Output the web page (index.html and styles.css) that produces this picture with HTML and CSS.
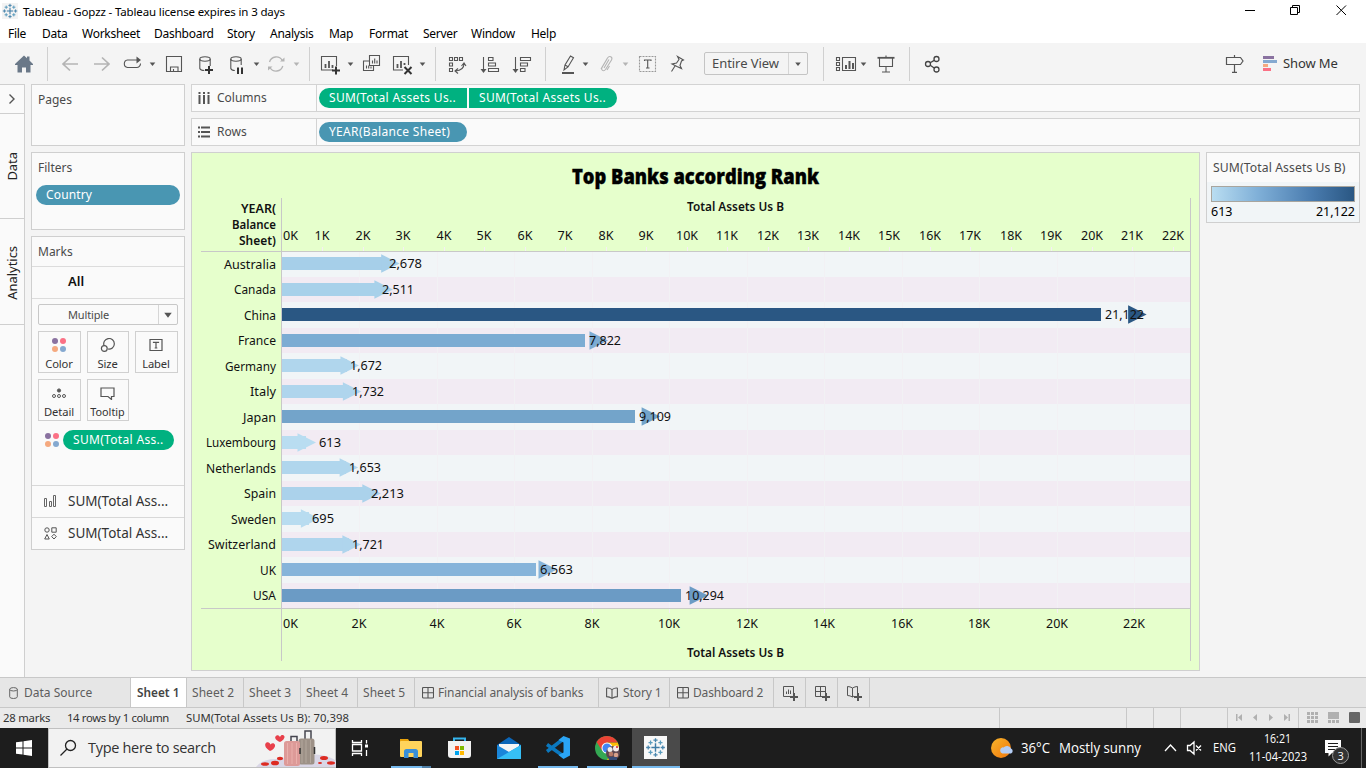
FILE: index.html
```html
<!DOCTYPE html>
<html lang="en">
<head>
<meta charset="utf-8">
<title>Tableau - Gopzz</title>
<link rel="stylesheet" href="styles.css">
</head>
<body>
<svg class="defs" width="0" height="0" aria-hidden="true">
  <defs>
    <g id="dots"><circle cx="3" cy="3" r="3" fill="#8a72a0"/><circle cx="11" cy="3" r="3" fill="#fb7185"/><circle cx="3" cy="11" r="3" fill="#f5a97f"/><circle cx="11" cy="11" r="3" fill="#85a9d0"/></g>
    <path id="caret" d="M-2.8-1.6H2.8L0 2z"/>
    <g id="dash" fill="none" stroke="#555" stroke-width="1.1"><rect x=".5" y=".5" width="11" height="10.5" rx="1"/><path d="M6 .5V11M.5 5.8H11.5"/></g>
    <path id="book" d="M.6 1.2Q3 .6 6 2.6Q9 .6 11.4 1.2V9.6Q8.5 9.6 6 11.4Q3.5 9.6.6 9.6ZM6 2.6V11" fill="none" stroke="#555" stroke-width="1.1"/>
    <g id="spark" stroke-width="1.1" fill="none">
      <path d="M8 4.8V11.2M4.8 8H11.2" stroke="#3f7ca6"/>
      <path d="M8 .8V4M6.4 2.4H9.6M8 12V15.2M6.4 13.6H9.6M.8 8H4M2.4 6.4V9.6M12 8H15.2M13.6 6.4V9.6" stroke="#4a86ad" stroke-width="1"/>
      <path d="M4.2 2.6V5.8M2.6 4.2H5.8M11.8 2.6V5.8M10.2 4.2H13.4M4.2 10.2V13.4M2.6 11.8H5.8M11.8 10.2V13.4M10.2 11.8H13.4" stroke="#5b9cbd" stroke-width="1"/>
    </g>
  </defs>
</svg>

<header class="titlebar">
  <svg width="16" height="16" viewBox="0 0 16 16"><rect width="16" height="16" fill="#f3f3f3"/><use href="#spark"/></svg>
  <span class="title">Tableau - Gopzz - Tableau license expires in 3 days</span>
  <svg class="winctl" width="136" height="24" viewBox="1230 0 136 24" fill="none" stroke="#000"><path d="M1245 10.5H1255M1290.5 7.5h7v7h-7zM1292.500 7.500v-2h7v7h-2M1336.500 5.500l9.500 9.500M1346 5.500l-9.500 9.500"/></svg>
</header>
<nav class="menubar"><span>File</span><span>Data</span><span>Worksheet</span><span>Dashboard</span><span>Story</span><span>Analysis</span><span>Map</span><span>Format</span><span>Server</span><span>Window</span><span>Help</span></nav>

<div class="toolbar">
  <svg width="48" height="41" viewBox="0 43 48 41"><path fill="#6a7888" d="M24 55.500l3 2.700v-1.700h2.500v4l3.500 3.500v1h-2.500v7.500h-4.500v-5h-4v5h-4.500v-7.500H15v-1z"/><path class="sep" d="M47.500 47v34"/></svg>
  <svg width="68" height="41" viewBox="48 43 68 41" class="line dim"><path stroke-width="1.7" d="M78 64H63M70 57.500L63 64l7 6.500M94 64h15M102 57.500l7 6.500-7 6.500"/></svg>
  <svg width="44" height="41" viewBox="116 43 44 41" class="line"><path d="M137 60h-9.500a3.800 3.800 0 0 0 0 7.500h9a3.800 3.800 0 0 0 4-4"/><path class="fill" d="M136.500 56.500l4.500 3.500-4.500 3.500z"/><use href="#caret" x="152.500" y="64" class="fill"/></svg>
  <svg width="28" height="41" viewBox="160 43 28 41" class="line"><path d="M166.500 56.500h15v15h-15zM170.500 71.500v-4.500h7.500v4.500M173.500 69v2"/></svg>
  <svg width="74" height="41" viewBox="188 43 74 41" class="line"><ellipse cx="205" cy="59" rx="5.200" ry="2.200"/><path d="M199.800 59v9.500q.8 2 4.500 2M210.200 59v7"/><path class="strong" d="M205 70h8M209 66v8"/><ellipse cx="236" cy="59" rx="5.200" ry="2.200"/><path d="M230.800 59v9.500q.8 2 4 2M241.200 59v6"/><path class="strong" d="M238 67.500v6.500M242 67.500v6.500"/><use href="#caret" x="256.500" y="64" class="fill"/></svg>
  <svg width="50" height="41" viewBox="262 43 50 41" class="line dim"><path stroke-width="1.300" d="M269.500 62a7 7 0 0 1 12.800-1.500M282.800 66a7 7 0 0 1-12.800 1.500"/><path class="fill" d="M280 61.500h4.500v-4zM272.500 66.500H268v4z"/><use href="#caret" x="296.500" y="64" class="fill"/><path class="sep" d="M309.500 47v34"/></svg>
  <svg width="124" height="41" viewBox="312 43 124 41" class="line"><path d="M333 70h-11.500v-13.500h15V66"/><path stroke-width="1.800" d="M325.500 68v-4M329 68v-7M332.500 68v-3"/><path class="strong" d="M332 70.500h8M336 66.500v8"/><use href="#caret" x="350.500" y="64" class="fill"/>
    <path d="M369.500 55.500h10v10h-10zM369 61h-5.500v9.500h10v-4.500M372.500 63.500v-3M374.700 63.500v-5M377 63.500v-3M366.500 68.500v-3M368.700 68.500v-3M371 68.500v-2"/>
    <path d="M403 70h-9.500v-13.500h15V65"/><path stroke-width="1.800" d="M397.500 68v-4M401 68v-7M404.500 65v-2"/><path class="strong" d="M404.500 67l7 7M411.500 67l-7 7"/><use href="#caret" x="422.500" y="64" class="fill"/><path class="sep" d="M435.500 47v34"/></svg>
  <svg width="110" height="41" viewBox="436 43 110 41" class="line"><path d="M449.500 57.500h3v3h-3zM454.500 57.500h3v3h-3zM459.500 57.500h3v3h-3zM449.500 63h3v3h-3zM449.500 68.500h3v3h-3zM464 63.500q0 7-8.500 7.500M461.500 66l2.500-3 2 3M458 68.500l-3 2.500 3 2.500"/>
    <path d="M483.500 57v14M488.500 57.500h4.500v3h-4.500zM488.500 63h7v3h-7zM488.500 68.500h10v3h-10z"/><path class="fill" d="M480.500 69h6l-3 4z"/>
    <path d="M515.500 57v14M520.500 57.500h10v3h-10zM520.500 63h7v3h-7zM520.500 68.500h4.500v3h-4.500z"/><path class="fill" d="M512.500 69h6l-3 4z"/><path class="sep" d="M545.500 47v34"/></svg>
  <svg width="158" height="41" viewBox="546 43 158 41" class="line"><path d="M564 70l1-5 5.500-9 3 1.700-5.500 9.300zM565 65l3.500 2"/><path stroke-width="2" d="M562 73h12"/><use href="#caret" x="585.500" y="64" class="fill"/>
    <g class="dim"><path d="M601 69l6.500-11c2-3 5.500-1 4 2l-6 9.500c-1.800 2.500-5 .5-3.500-2l5-8.500M604 68l5-8.500M609.500 66l-2.500 4"/><use href="#caret" x="625.500" y="64" class="fill"/></g>
    <rect x="639.500" y="56.500" width="16" height="15" stroke-dasharray="2 1" stroke="#999"/><path d="M644.500 61v-1h6.500v1M647.700 60v8M646 68h3.500"/>
    <path d="M677.500 56.500l6 3.500-2 1-1.500 4.500 1.500 3-4.500-2-5-2.500 4.500-1 2.500-3.500zM675 66l-3.500 5.500"/></svg>
  <div class="combo"><span>Entire View</span><i><svg width="8" height="6" viewBox="-4 -3 8 6"><use href="#caret" fill="#555"/></svg></i></div>
  <svg width="140" height="41" viewBox="808 43 140 41" class="line"><path class="sep" d="M823.500 47v34M909.500 47v34"/><path d="M836.500 57.500h3v3h-3zM836.500 62.500h3v3h-3zM836.500 67.500h3v3h-3zM842.500 57.500h13v13h-13z"/><path stroke-width="2" d="M846 69v-4M849.500 69v-8M853 69v-6"/><use href="#caret" x="863.500" y="64" class="fill"/>
    <path d="M879.500 58v8.500h13V58M886 55.500v2M886 67v5M882 72h8"/><path stroke-width="1.800" d="M877.500 57.800h17"/>
    <g stroke="#444" stroke-width="1.300"><circle cx="928" cy="64" r="2.500"/><circle cx="936.500" cy="59" r="2.500"/><circle cx="936.500" cy="69.500" r="2.500"/><path d="M930.200 62.800l4-2.400M930.200 65.300l4 2.700"/></g></svg>
  <svg class="guide" width="62" height="41" viewBox="1218 43 62 41"><path fill="none" stroke="#555" stroke-width="1.200" d="M1226.500 57.500h14l2.500 3.500-2.500 3.500h-14zM1234.500 55v2.500M1234.500 64.500v7.500M1232 72.400h5"/><path fill="#8a72a0" d="M1263 56h11v3h-11z"/><path fill="#85a9d0" d="M1263 60h14v3h-14z"/><path fill="#f5a97f" d="M1263 64h5v3h-5z"/><path fill="#fb7185" d="M1263 68h8v3h-8z"/></svg>
  <span class="showme">Show Me</span>
</div>

<main class="workspace">
  <aside class="rail">
    <div class="expand"><svg width="8" height="12" viewBox="0 0 8 12"><path d="M1.500 1.500L6 6l-4.500 4.500" fill="none" stroke="#555" stroke-width="1.400"/></svg></div>
    <div class="vtab"><span>Data</span></div>
    <div class="vtab"><span>Analytics</span></div>
  </aside>

  <section class="cards">
    <div class="card pages"><h2>Pages</h2></div>
    <div class="card filters"><h2>Filters</h2><div class="pill blue">Country</div></div>
    <div class="card marks">
      <h2>Marks</h2>
      <div class="all">All</div>
      <div class="body">
        <div class="select"><span>Multiple</span><i><svg width="10" height="8" viewBox="-3.600 -3 7.200 6"><use href="#caret" fill="#555"/></svg></i></div>
        <div class="buttons">
          <div class="btn"><svg width="14" height="14" viewBox="0 0 14 14"><use href="#dots"/></svg><span>Color</span></div>
          <div class="btn"><svg width="16" height="14" viewBox="0 0 16 14" fill="none" stroke="#555" stroke-width="1.200"><path d="M4 7.500a5.300 5.300 0 1 1 4 3.500"/><circle cx="4.300" cy="10.500" r="2.900"/></svg><span>Size</span></div>
          <div class="btn"><svg width="14" height="14" viewBox="0 0 14 14" fill="none" stroke="#555" stroke-width="1.200"><path d="M1 1.500h12v11H1zM4.500 5V4.400h5V5M7 4.400V10M5.700 10h2.600"/></svg><span>Label</span></div>
          <div class="btn"><svg width="14" height="14" viewBox="0 0 14 14" fill="none" stroke="#555"><circle cx="7" cy="4.500" r="1.600" fill="#555"/><circle cx="2" cy="10" r="1.500"/><circle cx="7" cy="10" r="1.500"/><circle cx="12" cy="10" r="1.500"/></svg><span>Detail</span></div>
          <div class="btn tip"><svg width="15" height="14" viewBox="0 0 15 14" fill="none" stroke="#555" stroke-width="1.200"><path d="M1 2h13v8.500h-2.500v3l-3.500-3H1z"/></svg><span>Tooltip</span></div>
        </div>
        <div class="encoding"><svg width="14" height="14" viewBox="0 0 14 14"><use href="#dots"/></svg><div class="pill green">SUM(Total Ass..</div></div>
      </div>
      <div class="layer"><svg width="13" height="13" viewBox="0 0 13 13" fill="none" stroke="#666"><path d="M.5 3.500h2v8h-2zM5.500 6.500h2v5h-2zM9.500 .500h2v11h-2z"/></svg>SUM(Total Ass...</div>
      <div class="layer"><svg width="13" height="13" viewBox="0 0 13 13" fill="none" stroke="#555"><circle cx="3" cy="3" r="2.200"/><path d="M7.800 .800h4.400v4.400H7.800zM.700 12l2.300-4.500L5.300 12zM10 7.200l2.300 2.400L10 12 7.700 9.600z"/></svg>SUM(Total Ass...</div>
    </div>
  </section>

  <section class="center">
    <div class="shelf"><div class="name"><svg width="12" height="12" viewBox="0 0 12 12" fill="#555"><path d="M.500 0h2v2h-2zM5 0h2v2H5zM9.500 0h2v2h-2zM.500 3h2v9h-2zM5 3h2v9H5zM9.500 3h2v9h-2z"/></svg>Columns</div><div class="pill green first">SUM(Total Assets Us..</div><div class="pill green last">SUM(Total Assets Us..</div></div>
    <div class="shelf"><div class="name"><svg width="12" height="12" viewBox="0 0 12 12" fill="#555"><path d="M0 .500h2v2H0zM0 5h2v2H0zM0 9.500h2v2H0zM3 .500h9v2H3zM3 5h9v2H3zM3 9.500h9v2H3z"/></svg>Rows</div><div class="pill blue">YEAR(Balance Sheet)</div></div>
    <div class="lower">
      <svg id="chart" class="chart" width="1007" height="517" viewBox="192 153 1007 517"></svg>
      <div class="legend"><h3>SUM(Total Assets Us B)</h3><div class="scale"><div class="ramp"></div><p><span>613</span><span>21,122</span></p></div></div>
    </div>
  </section>
</main>

<nav class="tabs">
  <div class="tab source"><svg width="9" height="12" viewBox="0 0 9 12" fill="none" stroke="#666"><ellipse cx="4.500" cy="2.300" rx="3.800" ry="1.700"/><path d="M.700 2.300v7.500q0 1.700 3.800 1.700t3.800-1.700V2.300"/></svg>Data Source</div>
  <div class="tab active">Sheet 1</div>
  <div class="tab sheet">Sheet 2</div><div class="tab sheet">Sheet 3</div><div class="tab sheet">Sheet 4</div><div class="tab sheet">Sheet 5</div>
  <div class="tab fin"><svg width="12" height="12"><use href="#dash"/></svg>Financial analysis of banks</div>
  <div class="tab story"><svg width="12" height="12"><use href="#book"/></svg>Story 1</div>
  <div class="tab dash2"><svg width="12" height="12"><use href="#dash"/></svg>Dashboard 2</div>
  <div class="tab new"><svg width="16" height="16" fill="none" stroke="#555"><path d="M9 11.500H1.500V1.500h10V8M4.500 9V6.500M6.500 9V4.500M8.500 9V5.500"/><path stroke-width="2" d="M8 12h8M12 8v8"/></svg></div>
  <div class="tab new"><svg width="16" height="16" fill="none" stroke="#555"><path d="M9 11.500H1.500V1.500h10V8M6.500 1.500v10M1.500 6.500h10"/><path stroke-width="2" d="M8 12h8M12 8v8"/></svg></div>
  <div class="tab new"><svg width="16" height="16" fill="none" stroke="#555"><path d="M8 11L6.500 12Q4 10.500 1.500 10.500V1.500Q4 1.500 6.500 3 9 1.500 11.500 1.500V8M6.500 3v9"/><path stroke-width="2" d="M8 12h8M12 8v8"/></svg></div>
</nav>

<footer class="status">
  <span class="s1">28 marks</span><span class="s2">14 rows by 1 column</span><span class="s3">SUM(Total Assets Us B): 70,398</span>
  <svg width="367" height="20" viewBox="999 708 367 20"><path d="M999.500 708v20M1126.500 708v20M1153.500 708v20M1180.500 708v20M1227.500 708v20M1298.500 708v20" stroke="#c8c8c8"/><path fill="#b0b0b0" d="M1236 714h1.500v7h-1.500zM1242 714v7l-4-3.500zM1257 714v7l-4-3.500zM1269 714v7l4-3.500zM1284 714v7l4-3.500zM1288.500 714h1.500v7h-1.500zM1307 712h3v3h-3zM1311 712h3v3h-3zM1315 712h3v3h-3zM1307 716h3v3h-3zM1311 716h3v3h-3zM1315 716h3v3h-3zM1307 720h3v3h-3zM1311 720h3v3h-3zM1315 720h3v3h-3zM1328 712h11v7h-11zM1328 720h3v3h-3zM1332 720h3v3h-3zM1336 720h3v3h-3z"/><rect x="1349" y="712" width="11" height="11" rx="1" fill="#666"/></svg>
</footer>

<footer class="taskbar">
  <svg width="48" height="40" viewBox="0 728 48 40" fill="#fff"><path d="M16 742.300l6.500-.900v6.100H16zM23.500 741.200l8.500-1.200v7.500h-8.500zM16 748.500h6.500v6.100l-6.500-.900zM23.500 748.500H32v7.500l-8.500-1.200z"/></svg>
  <div class="search">
    <svg width="38" height="38" viewBox="49 729 38 38" fill="none" stroke="#222" stroke-width="1.300"><circle cx="70.500" cy="745.500" r="5"/><path d="M67 749l-6.500 6.500"/></svg>
    <span>Type here to search</span>
    <svg class="trip" width="82" height="38" viewBox="254 729 82 38"><path d="M256 767q6-8 20-8l30-5q22 0 30 7v6z" fill="#d9d6e6"/><g fill="none" stroke="#45454f" stroke-width="1.500"><path d="M291 742v-5.500h6V742M305 739v-8h6v8"/></g><rect x="298.500" y="738.500" width="16" height="26" rx="2.500" fill="#9d9187"/><path d="M302 740v23M306 740v23M310.500 740v23" stroke="#b3a89d"/><rect x="284" y="741" width="16" height="25" rx="2.500" fill="#dd9a98"/><path d="M287.500 743v21M292 743v21M296.500 743v21" stroke="#eab0ac"/><path d="M300 748v6M314.500 747v7" stroke="#333" stroke-width="1.500"/><path fill="#e8404b" d="M270 751c-5-3-6-7-3.500-8.500 2-1 3.500.500 4 2 1.500-2 4-1.500 4.500.500.500 2-2 5-5 6zM280 742c-5-2-6-5-3.500-6.500 2-1 3 .500 3.500 1.500 1-3 4-2.500 4.500-.500.300 2-2 4.500-4.500 5.500z"/><g fill="#dd2b22"><ellipse cx="265" cy="764" rx="4" ry="1.800"/><ellipse cx="275" cy="763" rx="4" ry="2.300"/><ellipse cx="280" cy="758.500" rx="3" ry="1.700"/><ellipse cx="324" cy="758" rx="4" ry="2"/><ellipse cx="331" cy="763" rx="4" ry="1.700"/><ellipse cx="320" cy="763" rx="2" ry="1"/></g></svg>
  </div>
  <svg width="48" height="40" viewBox="336 728 48 40" fill="none" stroke="#fff" stroke-width="1.300"><path d="M352.500 740v2.500h9V740M352.500 756v-2.500h9v2.500M352.500 744.500h9v6.500h-9zM366.500 740v3.500M366.500 750v6"/><path fill="#fff" stroke="none" d="M365 744.500h3v3h-3z"/></svg>
  <svg width="51" height="40" viewBox="384 728 51 40"><path fill="#e9a30c" d="M400 739h8l2 3h-10z"/><rect x="400" y="741" width="22" height="16" rx="1" fill="#ffd45c"/><path fill="#3a8fd8" d="M404 758v-6.500q0-2.500 2.500-2.500h9q2.500 0 2.500 2.500v6.500h-4.500v-5h-5v5z"/><path fill="#76b9ed" d="M391 766h31v2h-31z"/><path fill="#4f7fa6" d="M422 766h9v2h-9z"/></svg>
  <svg width="49" height="40" viewBox="435 728 49 40"><path d="M454 742v-3.500h11v3.500" fill="none" stroke="#35b5ee" stroke-width="2"/><path d="M448 741h23v14q0 3-3 3h-17q-3 0-3-3z" fill="#f2f2f2"/><path fill="#f25022" d="M455 746h4v4h-4z"/><path fill="#7fba00" d="M460 746h4v4h-4z"/><path fill="#00a4ef" d="M455 751h4v4h-4z"/><path fill="#ffb900" d="M460 751h4v4h-4z"/></svg>
  <svg width="49" height="40" viewBox="484 728 49 40"><path fill="#0b66b8" d="M497 745l12-8 12 8v4h-24z"/><path fill="#f5f5f5" d="M499 744h20v6l-10 5-10-5z"/><path fill="#1a86d9" d="M497 745l12 7 12-7v14h-24z"/><path fill="#36bff5" d="M521 745v14h-24z"/></svg>
  <svg width="49" height="40" viewBox="533 728 49 40"><path d="M547 744.500l17 12M547 751.500l17-13" stroke="#0b78be" stroke-width="3.500"/><path fill="#2aa4f4" d="M563.500 736l6.500 2.500v17l-6.500 3.500-5-4 5-2.500v-10l-5-2.500z"/><path fill="#76b9ed" d="M538 766h40v2h-40z"/></svg>
  <svg width="50" height="40" viewBox="582 728 50 40"><circle cx="607" cy="748" r="12" fill="#34a853"/><path fill="#fbbc05" d="M607 742.500h10.700a12 12 0 0 1-10.700 17.500l5-9z"/><path fill="#ea4335" d="M596.600 742a12 12 0 0 1 20.800 0v.500H607l-5 8z"/><circle cx="607" cy="748" r="5.500" fill="#fff"/><circle cx="607" cy="748" r="4.500" fill="#4285f4"/><circle cx="613" cy="753" r="7" fill="#5b4550"/><circle cx="610" cy="749.500" r="2.500" fill="#eee"/><circle cx="616" cy="748.500" r="3" fill="#f5e9e9"/><circle cx="611" cy="754" r="2.300" fill="#b97a68"/><circle cx="616" cy="755" r="2.300" fill="#d8a08b"/><path fill="#364a77" d="M608 757h9v3h-8z"/><circle cx="617" cy="747" r="1" fill="#d22"/><path fill="#76b9ed" d="M587 766h40v2h-40z"/></svg>
  <svg width="48" height="40" viewBox="632 728 48 40"><path fill="#4a4a4a" d="M632 728h48v40h-48z"/><path fill="#f8f8f8" d="M644 736h23v23h-23z"/><use href="#spark" transform="translate(645.100 737.100) scale(1.300)"/><path fill="#76b9ed" d="M632 766h48v2h-48z"/></svg>
  <svg class="tray" width="386" height="40" viewBox="980 728 386 40">
    <defs><linearGradient id="sun" x1="0" x2="1" y1="0" y2="1"><stop offset="0" stop-color="#f7b52c"/><stop offset="1" stop-color="#f0760c"/></linearGradient></defs>
    <circle cx="1001" cy="748" r="10" fill="url(#sun)"/><path fill="#b4cdf5" d="M1002.500 753.500a3.200 3.200 0 0 1-.500-6q1-.300 1.500 0a4.500 4.500 0 0 1 7.500 1 2.700 2.700 0 0 1 0 5z"/>
    <g fill="#fff" font-size="14"><text x="1021" y="753" textLength="29" lengthAdjust="spacingAndGlyphs">36°C</text><text x="1059" y="753" textLength="82" lengthAdjust="spacingAndGlyphs">Mostly sunny</text></g>
    <g fill="none" stroke="#fff" stroke-width="1.300"><path d="M1165 751l5.500-6 5.500 6M1187.500 745.500h2.500l4-3.500v12l-4-3.500h-2.500zM1196 745.500l5 5M1201 745.500l-5 5"/></g>
    <g fill="#fff" font-size="12"><text x="1213" y="752" textLength="23" lengthAdjust="spacingAndGlyphs">ENG</text><text x="1264" y="743" textLength="27" lengthAdjust="spacingAndGlyphs">16:21</text><text x="1249" y="761" textLength="58" lengthAdjust="spacingAndGlyphs">11-04-2023</text></g>
    <path fill="#fff" d="M1325 740h16v13h-9l-3.500 3.500V753h-3.500z"/><path stroke="#1e1e1e" d="M1328 743.500h10M1328 746.500h10M1328 749.500h7"/><circle cx="1340.500" cy="755.500" r="8" fill="#333" stroke="#999"/><text x="1337.500" y="759.500" fill="#fff" font-size="11">3</text><path stroke="#666" d="M1361.500 728v40"/>
  </svg>
</footer>
<script src="chart.js"></script>
</body>
</html>
```
FILE: styles.css
```css
* { box-sizing: border-box; }
html, body { margin: 0; }
body { width: 1366px; height: 768px; overflow: hidden; display: flex; flex-direction: column; background: #f4f4f4; color: #4a4a4a; font-family: "Noto Sans", sans-serif; font-size: 12px; }
svg { display: block; flex: none; }
.defs { height: 0; }
h2, h3, p { margin: 0; font-weight: 400; }

.titlebar { height: 24px; background: #fff; display: flex; padding-left: 2px; }
.titlebar > svg:first-child { margin-top: 3px; }
.title { margin-left: 5px; line-height: 24px; font-size: 11.5px; letter-spacing: -.14px; color: #000; white-space: nowrap; }
.winctl { margin-left: auto; }
.menubar { height: 19px; background: #fff; padding-left: 8px; display: grid; grid-template-columns: 34px 40px 72px 73px 43px 59px 40px 54px 48px 60px 40px; line-height: 20px; color: #000; font-size: 12px; letter-spacing: -.27px; }

.toolbar { height: 41px; display: flex; background: #f4f4f4; }
.line { fill: none; stroke: #555; stroke-width: 1.1; }
.dim { stroke: #b4b4b4; fill: none; }
.sep { stroke: #d0d0d0; stroke-width: 1; }
.fill { fill: #555; stroke: none; }
.dim .fill { fill: #b4b4b4; }
.strong { stroke: #333; stroke-width: 2; }
.combo { width: 104px; height: 23px; margin-top: 9px; border: 1px solid #c4c4c4; border-radius: 2px; display: flex; font-size: 13px; line-height: 20px; letter-spacing: -.05px; }
.combo span { flex: 1; padding-left: 7px; white-space: nowrap; }
.combo i { width: 19px; border-left: 1px solid #d6d6d6; display: grid; place-items: center; }
.guide { margin-left: auto; }
.showme { width: 86px; padding-left: 3px; font-size: 13px; letter-spacing: -.1px; line-height: 41px; color: #333; }

.workspace { height: 593px; display: flex; }
.rail { width: 25px; border: 1px solid #cfcfcf; border-width: 1px 1px 0 0; background: #fafafa; }
.expand { height: 29px; border-bottom: 1px solid #cfcfcf; display: grid; place-items: center; }
.vtab { height: 105px; border-bottom: 1px solid #cfcfcf; display: grid; place-items: center; }
.vtab + .vtab { height: 106px; padding-top: 2px; }
.vtab span { writing-mode: vertical-rl; transform: rotate(180deg); font-size: 13px; letter-spacing: -.05px; color: #222; }

.cards { width: 154px; margin-left: 6px; display: flex; flex-direction: column; gap: 6px; }
.card { border: 1px solid #cfcfcf; background: #fafafa; }
.card h2 { font-size: 12px; padding-left: 6px; line-height: 30px; letter-spacing: 0; }
.pages { height: 62px; }
.filters { height: 78px; }
.filters .pill { margin: 2px 4px 0; padding-left: 10px; letter-spacing: .15px; }
.pill { height: 20px; border-radius: 10px; color: #fff; line-height: 19px; padding-left: 10px; font-size: 12px; letter-spacing: .32px; white-space: nowrap; }
.blue { background: #4996b2; }
.green { background: #00b180; }
.marks { height: 314px; }
.all { height: 33px; border: 1px solid #dcdcdc; border-width: 1px 0; font-size: 13px; font-weight: 600; color: #111; line-height: 29px; padding-left: 36px; margin-top: -1px; }
.body { height: 186px; padding: 5px 6px 0; }
.select { height: 21px; border: 1px solid #c8c8c8; border-radius: 2px; display: flex; font-size: 11px; letter-spacing: -.15px; line-height: 19px; }
.select span { flex: 1; padding-left: 29px; }
.select i { width: 19px; border-left: 1px solid #d6d6d6; display: grid; place-items: center; }
.buttons { display: grid; grid-template-columns: 43px 42px 43px; gap: 6px; margin-top: 6px; }
.btn { height: 42px; border: 1px solid #d0d0d0; display: flex; flex-direction: column; align-items: center; padding: 6px 1px 0 0; color: #333; font-size: 11.2px; letter-spacing: -.1px; line-height: 14px; }
.btn span { margin-top: 5px; white-space: nowrap; }
.tip { font-size: 10.8px; letter-spacing: 0; }
.encoding { display: flex; align-items: center; gap: 4px; margin: 9px 0 0 7px; }
.encoding .pill { width: 111px; }
.layer { height: 32px; border-top: 1px solid #d8d8d8; display: flex; align-items: center; gap: 11px; padding: 0 0 1px 12px; font-size: 13.5px; color: #333; white-space: nowrap; }

.center { margin-left: 6px; width: 1169px; display: flex; flex-direction: column; gap: 6px; }
.shelf { height: 28px; border: 1px solid #d3d3d3; background: #fafafa; display: flex; align-items: center; }
.name { width: 125px; height: 26px; border-right: 1px solid #d3d3d3; display: flex; align-items: center; gap: 7px; padding: 0 0 1px 6px; margin-right: 2px; letter-spacing: 0; }
.shelf .pill { width: 148px; }
.shelf .first { border-radius: 10px 0 0 10px; }
.shelf .last { border-radius: 0 10px 10px 0; margin-left: 2px; }
.lower { display: flex; justify-content: space-between; align-items: flex-start; }
.chart { box-sizing: content-box; border: 1px solid #d0d0d0; background: #e6ffcc; }
.legend { width: 154px; height: 71px; border: 1px solid #cfcfcf; background: #fafafa; }
.legend h3 { height: 29px; line-height: 30px; padding-left: 6px; font-size: 12.2px; letter-spacing: .1px; white-space: nowrap; }
.scale { height: 40px; background: #f1f5f7; padding: 4px 4px 0; }
.ramp { height: 16px; border: 1px solid #a8a59e; background: linear-gradient(90deg, #b9ddf1, #80b0d8 32%, #4a7caf 70%, #2a5783); }
.scale p { display: flex; justify-content: space-between; color: #000; line-height: 20px; font-size: 12.5px; }

.tabs { height: 31px; border: 1px solid #c8c8c8; border-width: 1px 0; background: #e6e6e6; display: flex; color: #5d5d5d; font-size: 12px; }
.tab { border-right: 1px solid #c8c8c8; display: flex; align-items: center; gap: 5px; padding-left: 5px; white-space: nowrap; }
.source { width: 131px; padding-left: 9px; gap: 6px; }
.active { width: 56px; padding: 0 0 2px 6px; background: #fff; font-size: 11.8px; font-weight: 600; color: #444; }
.sheet { width: 57px; letter-spacing: .05px; }
.fin { width: 184px; padding-left: 7px; gap: 4px; letter-spacing: -.12px; }
.story { width: 71px; padding-left: 7px; letter-spacing: -.1px; }
.dash2 { width: 104px; padding-left: 7px; gap: 4px; letter-spacing: -.18px; }
.new { width: 32px; padding-left: 8px; }
.status { height: 20px; background: #eaeaea; display: flex; line-height: 20px; font-size: 11.3px; color: #333; white-space: nowrap; letter-spacing: -.1px; }
.s1 { width: 67px; padding-left: 3px; letter-spacing: -.2px; }
.s2 { width: 119px; letter-spacing: -.35px; }
.s3 { width: 813px; letter-spacing: .03px; }

.taskbar { height: 40px; background: #1d1d1d; display: flex; font-family: "Open Sans", "Noto Sans", sans-serif; }
.search { width: 288px; border: 1px solid #c0c0c0; background: #f2f2f2; display: flex; color: #333; font-size: 14.5px; line-height: 38px; }
.search span { width: 168px; padding-left: 1px; white-space: nowrap; letter-spacing: -.3px; }
.trip { margin-left: auto; margin-right: -1px; }
.tray { margin-left: auto; }

.axis, .label { font: 12.5px "Noto Sans", sans-serif; fill: #111; }
.head { font: 600 12px "Noto Sans", sans-serif; fill: #111; }
.heading { font: 800 21px "Open Sans", sans-serif; fill: #000; stroke: #000; stroke-width: .4; }
.rule { stroke: #c8c8c8; }
.grid { stroke: #f2f1f4; }
.tick { stroke: #f5eef5; }
```
FILE: chart.js
```javascript
const chart = document.getElementById('chart');
const rows = [
  ['Australia', 2678, 52, 389, 33, '#a6cfe9'], ['Canada', 2511, 42, 382, 32, '#a8d1ea'],
  ['China', 21122, 32, 1105, 39, '#2a5783'], ['France', 7822, 38, 589, 32, '#7cacd3'],
  ['Germany', 1672, 51, 350, 32, '#b0d6ed'], ['Italy', 1732, 26, 352, 32, '#afd5ed'],
  ['Japan', 9109, 33, 639, 32, '#73a4ca'], ['Luxembourg', 613, 70, 319, 22, '#b9ddf1'],
  ['Netherlands', 1653, 70, 349, 32, '#b0d6ed'], ['Spain', 2213, 32, 371, 33, '#abd2eb'],
  ['Sweden', 695, 45, 312, 22, '#b8dcf0'], ['Switzerland', 1721, 68, 352, 32, '#afd5ed'],
  ['UK', 6563, 16, 540, 33, '#86b4da'], ['USA', 10294, 23, 685, 39, '#6b9bc5']
];
const left = 282, right = 1190;
const edges = [252, 277, 302, 328, 353, 379, 404, 430, 455, 481, 506, 532, 557, 583, 608];
const barScale = 0.03877, arrowScale = 0.0405;
const text = (cls, x, y, s, w, anchor = 'start') =>
  `<text class="${cls}" x="${x}" y="${y}" textLength="${w}" lengthAdjust="spacingAndGlyphs" text-anchor="${anchor}">${s}</text>`;
const line = (cls, x1, y1, x2, y2) => `<path class="${cls}" d="M${x1} ${y1}L${x2} ${y2}"/>`;

let bands = '', grid = '', marks = '', labels = '', axes = '';
rows.forEach(([name, value, nameWidth, labelX, labelWidth, color], i) => {
  const y = edges[i], barY = y + (i ? 6 : 5), mid = barY + 6.5;
  const barWidth = Math.round(value * barScale), cx = left + value * arrowScale;
  bands += `<rect x="${left}" y="${y}" width="${right - left}" height="${edges[i + 1] - y}" fill="${i % 2 ? '#f2ebf3' : '#f1f5f7'}"/>`;
  marks += `<rect x="${left}" y="${barY}" width="${barWidth}" height="13" fill="${color}"/>`;
  marks += `<path d="M${cx - 9.3} ${mid - 9.2}L${cx + 9.2} ${mid}L${cx - 9.3} ${mid + 9.2}Z" fill="${color}"/>`;
  labels += text('label', labelX, barY + 11, value.toLocaleString('en-US'), labelWidth);
  labels += text('label', 276, barY + (i % 2 ? 11 : 12), name, nameWidth, 'end');
});
for (let k = 0; k <= 22; k++) {
  const x = Math.floor(left + k * 40.5), w = k > 9 ? 22 : 15;
  if (k) axes += line('tick', x + 0.5, 247, x + 0.5, 251);
  axes += text('axis', k ? x : 290.5, 240, k + 'K', w, 'middle');
}
for (let k = 0; k <= 22; k += 2) {
  const x = Math.floor(left + k * 38.77);
  if (k) {
    grid += line('grid', x + 0.5, 252, x + 0.5, 608);
    axes += line('tick', x + 0.5, 609, x + 0.5, 613);
  }
  axes += text('axis', k ? x : 290.5, 628, k + 'K', k > 9 ? 22 : 15, 'middle');
}
axes += line('rule', 281.5, 198, 281.5, 661) + line('rule', 1190.5, 198, 1190.5, 661)
  + line('rule', 201, 251.5, 1191, 251.5) + line('rule', 201, 608.5, 1191, 608.5);
const heads = text('heading', 572, 184, 'Top Banks according Rank', 247)
  + text('head', 687, 211, 'Total Assets Us B', 97) + text('head', 687, 657, 'Total Assets Us B', 97)
  + text('head', 276, 213, 'YEAR(', 35, 'end') + text('head', 276, 229, 'Balance', 44, 'end') + text('head', 276, 245, 'Sheet)', 37, 'end');
chart.innerHTML = bands + grid + marks + axes + labels + heads;
```
